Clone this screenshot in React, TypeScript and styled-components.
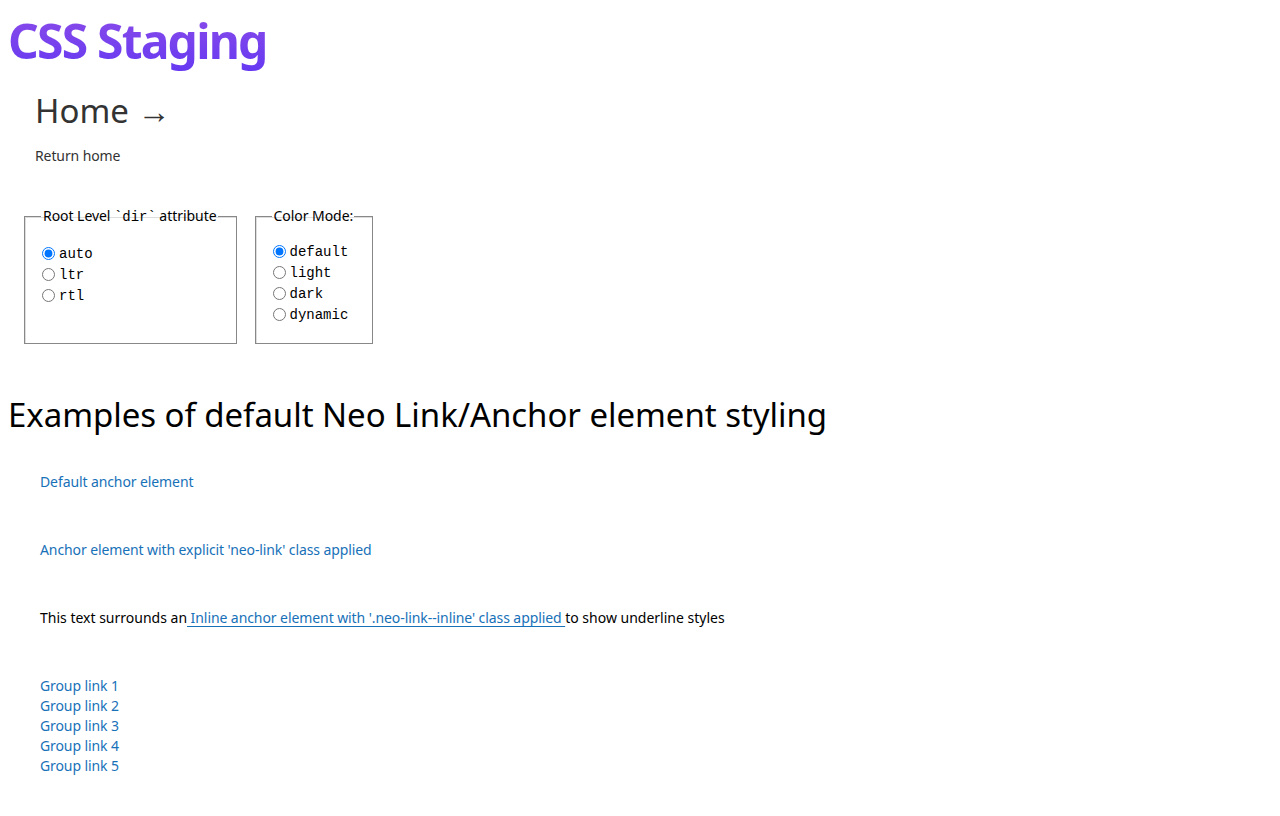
import * as React from "react";
import styled, { createGlobalStyle } from "styled-components";

const GlobalStyle = createGlobalStyle`
  body {
    margin: 8px;
    background: #fff;
    font-family: "Noto Sans", sans-serif;
    color: #000;
  }
`;

const Title = styled.h1`
  margin: 0;
  font-size: 48px;
  line-height: 66px;
  font-weight: 700;
  letter-spacing: -1.8px;
  display: inline-block;
  background: linear-gradient(180deg, #8d4de8 0%, #6438f2 100%);
  -webkit-background-clip: text;
  background-clip: text;
  color: transparent;
`;

const HomeBlock = styled.div`
  padding: 15px 27px 0;
`;

const HomeLink = styled.h2`
  margin: 0;
  font-size: 33px;
  line-height: 44px;
  font-weight: 400;
  color: #333;
`;

const ReturnText = styled.p`
  margin: 13px 0 0;
  font-size: 14px;
  line-height: 20px;
  letter-spacing: -0.1px;
  color: #333;
`;

const Controls = styled.div`
  display: flex;
  gap: 18px;
  margin: 41px 0 0 16px;
`;

const Fieldset = styled.fieldset`
  margin: 0;
  padding: 16px 18px 18px 16px;
  border: 1px solid #888;
  box-shadow: inset 1px 1px 0 #ddd;
  min-width: 0;
`;

const Legend = styled.legend`
  padding: 0 1px 0 2px;
  font-size: 14px;
  line-height: 18px;
  font-family: "Noto Sans", sans-serif;
  letter-spacing: -0.05px;
`;

const Code = styled.code`
  font-family: "Liberation Mono", monospace;
  font-size: 14px;
`;

const Option = styled.label<{ $first?: boolean }>`
  display: flex;
  align-items: center;
  height: 21px;
  margin-top: ${(p) => (p.$first ? "1px" : "0")};
  font-family: "Liberation Mono", monospace;
  font-size: 14px;

  input {
    margin: 0 4px 0 1px;
    width: 13px;
    height: 13px;
  }
`;

const SectionTitle = styled.h2`
  margin: 49px 0 0;
  font-size: 33px;
  line-height: 44px;
  font-weight: 400;
  letter-spacing: -0.05px;
`;

const Examples = styled.div`
  padding: 35px 32px 0;
  display: flex;
  flex-direction: column;
  gap: 48px;
  font-size: 14px;
  line-height: 20px;
`;

const Link = styled.a`
  color: #1771b8;
  text-decoration: none;
  letter-spacing: -0.1px;
`;

const InlineLink = styled.a`
  color: #1771b8;
  text-decoration: underline;
  text-underline-offset: 3px;
  text-decoration-thickness: 1px;
  letter-spacing: -0.08px;
`;

const Group = styled.div`
  display: flex;
  flex-direction: column;
`;

const dirOptions = ["auto", "ltr", "rtl"];
const modeOptions = ["default", "light", "dark", "dynamic"];
const groupLinks = [1, 2, 3, 4, 5];

const App = () => {
  return (
    <>
      <GlobalStyle />
      <Title>CSS Staging</Title>
      <HomeBlock>
        <HomeLink>Home →</HomeLink>
        <ReturnText>Return home</ReturnText>
      </HomeBlock>
      <Controls>
        <Fieldset>
          <Legend>
            Root Level <Code>`dir`</Code> attribute
          </Legend>
          {dirOptions.map((o, i) => (
            <Option key={o} $first={i === 0}>
              <input type="radio" name="dir" defaultChecked={i === 0} />
              {o}
            </Option>
          ))}
        </Fieldset>
        <Fieldset>
          <Legend>Color Mode:</Legend>
          {modeOptions.map((o, i) => (
            <Option key={o}>
              <input type="radio" name="mode" defaultChecked={i === 0} />
              {o}
            </Option>
          ))}
        </Fieldset>
      </Controls>
      <SectionTitle>Examples of default Neo Link/Anchor element styling</SectionTitle>
      <Examples>
        <div>
          <Link href="#">Default anchor element</Link>
        </div>
        <div>
          <Link href="#">Anchor element with explicit 'neo-link' class applied</Link>
        </div>
        <div>
          This text surrounds an
          <InlineLink href="#"> Inline anchor element with '.neo-link--inline' class applied </InlineLink>
          to show underline styles
        </div>
        <Group>
          {groupLinks.map((n) => (
            <Link key={n} href="#">
              Group link {n}
            </Link>
          ))}
        </Group>
      </Examples>
    </>
  );
};

export default App;
